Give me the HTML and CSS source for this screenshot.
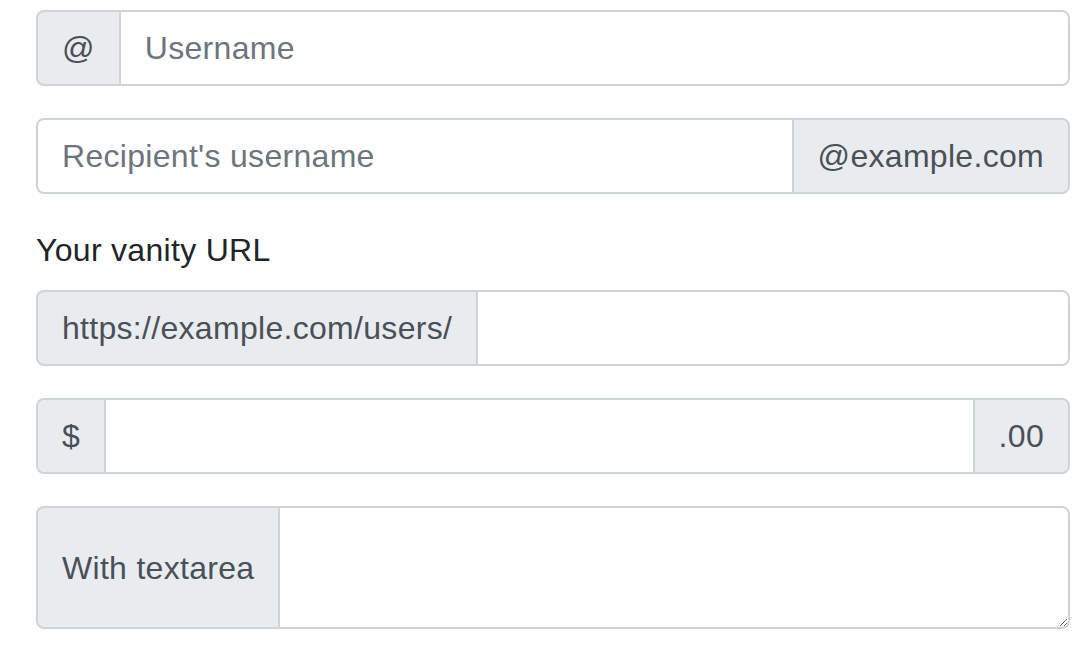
FILE: index.html
```html
<!DOCTYPE html>
<html lang="en">
<head>
<meta charset="utf-8">
<title>Input groups</title>
<link rel="stylesheet" href="styles.css">
</head>
<body>
<main class="page">
  <div class="input-group">
    <span class="addon">@</span>
    <input class="control" type="text" placeholder="Username">
  </div>
  <div class="input-group">
    <input class="control" type="text" placeholder="Recipient's username">
    <span class="addon">@example.com</span>
  </div>
  <label class="label" for="vanity">Your vanity URL</label>
  <div class="input-group">
    <span class="addon">https://example.com/users/</span>
    <input class="control" id="vanity" type="text">
  </div>
  <div class="input-group">
    <span class="addon">$</span>
    <input class="control" type="text">
    <span class="addon">.00</span>
  </div>
  <div class="input-group">
    <span class="addon">With textarea</span>
    <textarea class="control area" rows="2"></textarea>
  </div>
</main>
</body>
</html>
```
FILE: styles.css
```css
* { box-sizing: border-box; }
html, body { margin: 0; padding: 0; background: #fff; }
body {
  font-family: "Liberation Sans", Arial, sans-serif;
  font-size: 32px;
  line-height: 48px;
  letter-spacing: 0.3px;
  color: #212529;
}
.page {
  padding: 10px 14px 0 36px;
  display: flex;
  flex-direction: column;
}
.input-group {
  display: flex;
  align-items: stretch;
  width: 100%;
  margin-bottom: 32px;
}
.label {
  display: block;
  margin-bottom: 16px;
  color: #212529;
}
.addon {
  display: flex;
  align-items: center;
  padding: 12px 24px;
  font-size: 32px;
  line-height: 48px;
  color: #495057;
  background: #e9ecef;
  border: 2px solid #ced4da;
  white-space: nowrap;
}
.control {
  flex: 1 1 auto;
  min-width: 0;
  height: 76px;
  padding: 12px 24px;
  font-family: "Liberation Sans", Arial, sans-serif;
  font-size: 32px;
  line-height: 48px;
  letter-spacing: 0.3px;
  color: #495057;
  background: #fff;
  border: 2px solid #ced4da;
  border-radius: 0;
  outline: none;
  margin: 0;
}
.control::placeholder { color: #6c757d; opacity: 1; }
.area {
  height: 123px;
  resize: vertical;
  display: block;
}
.input-group > * + * { margin-left: -2px; }
.input-group > :first-child {
  border-top-left-radius: 8px;
  border-bottom-left-radius: 8px;
}
.input-group > :last-child {
  border-top-right-radius: 8px;
  border-bottom-right-radius: 8px;
}
```
